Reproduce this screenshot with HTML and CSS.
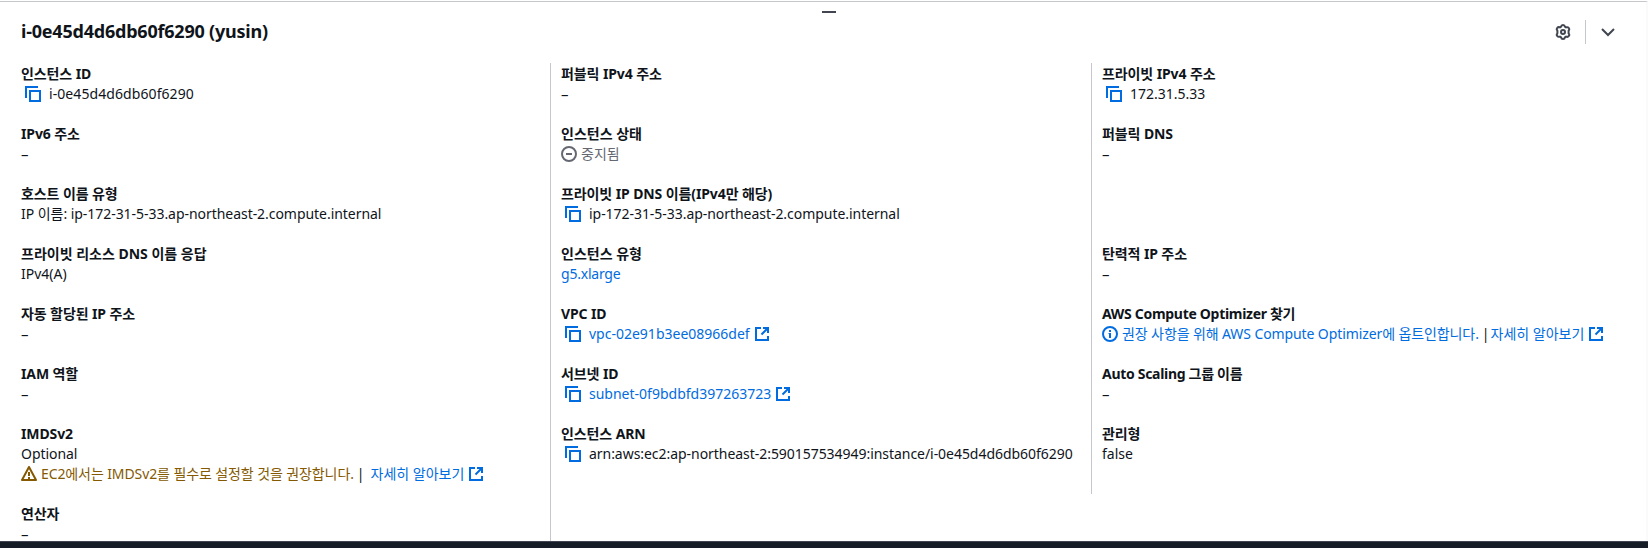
FILE: index.html
```html
<!DOCTYPE html>
<html lang="ko">
<head>
<meta charset="utf-8">
<title>i-0e45d4d6db60f6290 (yusin)</title>
<link rel="stylesheet" href="styles.css">
</head>
<body>
<svg class="sprite" aria-hidden="true">
  <symbol id="copy" viewBox="0 0 16 16"><path d="M15 5H5v10h10V5Z"/><path d="M13 1H1v11"/></symbol>
  <symbol id="external" viewBox="0 0 16 16"><path d="M9 2h5v5"/><path d="m7.500 8.500 6.500-6.500"/><path d="M14 10v4H2V2h5"/></symbol>
  <symbol id="stopped" viewBox="0 0 16 16"><circle cx="8" cy="8" r="7"/><path d="M11 8H5"/></symbol>
  <symbol id="info" viewBox="0 0 16 16"><circle cx="8" cy="8" r="7"/><path d="M8 12V7M8 6V4"/><path d="M6.500 7.500H9" stroke-width="1"/></symbol>
  <symbol id="warning" viewBox="0 0 16 16"><path d="m8 1 7 13H1L8 1Z" stroke-linejoin="round"/><path d="M8 6v4M8 11v2" /></symbol>
  <symbol id="gear" viewBox="0 0 16 16"><path stroke-linejoin="round" d="M6.100 2.700Q6.300 1 8 1T9.900 2.700L11 3.400Q12.800 2.700 13.800 4T13.600 6.600V9.400Q14.800 10.600 13.800 12T11 12.600L9.900 13.300Q9.700 15 8 15T6.100 13.300L5 12.600Q3.200 13.300 2.200 12T2.400 9.400V6.600Q1.200 5.400 2.200 4T5 3.400Z"/><circle cx="8" cy="8" r="2"/></symbol>
  <symbol id="chevron" viewBox="0 0 16 16"><path d="m2 5 6 6 6-6"/></symbol>
</svg>
<main class="panel">
  <div class="handle"></div>
  <header class="header">
    <h1 class="title">i-0e45d4d6db60f6290 (yusin)</h1>
    <div class="actions">
      <svg class="icon"><use href="#gear"/></svg>
      <span class="separator"></span>
      <svg class="icon"><use href="#chevron"/></svg>
    </div>
  </header>
  <div class="columns">
    <dl class="column">
      <div class="field"><dt>인스턴스 ID</dt><dd><svg class="icon copy"><use href="#copy"/></svg><span class="loose">i-0e45d4d6db60f6290</span></dd></div>
      <div class="field"><dt>IPv6 주소</dt><dd class="empty">–</dd></div>
      <div class="field"><dt>호스트 이름 유형</dt><dd class="snug">IP 이름: ip-172-31-5-33.ap-northeast-2.compute.internal</dd></div>
      <div class="field"><dt class="even">프라이빗 리소스 DNS 이름 응답</dt><dd>IPv4(A)</dd></div>
      <div class="field"><dt>자동 할당된 IP 주소</dt><dd class="empty">–</dd></div>
      <div class="field"><dt>IAM 역할</dt><dd class="empty">–</dd></div>
      <div class="field"><dt>IMDSv2</dt><dd class="snug">Optional</dd><dd class="warning"><svg class="icon status"><use href="#warning"/></svg><span class="tight">EC2에서는 IMDSv2를 필수로 설정할 것을 권장합니다.</span><span class="bar wide">|</span><a class="link">자세히 알아보기</a><svg class="icon external"><use href="#external"/></svg></dd></div>
      <div class="field"><dt>연산자</dt><dd class="empty">–</dd></div>
    </dl>
    <dl class="column">
      <div class="field"><dt>퍼블릭 IPv4 주소</dt><dd class="empty">–</dd></div>
      <div class="field"><dt class="even">인스턴스 상태</dt><dd class="stopped"><svg class="icon status"><use href="#stopped"/></svg><span>중지됨</span></dd></div>
      <div class="field"><dt>프라이빗 IP DNS 이름(IPv4만 해당)</dt><dd><svg class="icon copy"><use href="#copy"/></svg><span class="snug">ip-172-31-5-33.ap-northeast-2.compute.internal</span></dd></div>
      <div class="field"><dt class="even">인스턴스 유형</dt><dd><a class="link type">g5.xlarge</a></dd></div>
      <div class="field"><dt>VPC ID</dt><dd><svg class="icon copy"><use href="#copy"/></svg><a class="link">vpc-02e91b3ee08966def</a><svg class="icon external"><use href="#external"/></svg></dd></div>
      <div class="field"><dt>서브넷 ID</dt><dd><svg class="icon copy"><use href="#copy"/></svg><a class="link">subnet-0f9bdbfd397263723</a><svg class="icon external"><use href="#external"/></svg></dd></div>
      <div class="field"><dt>인스턴스 ARN</dt><dd><svg class="icon copy"><use href="#copy"/></svg><span class="snug">arn:aws:ec2:ap-northeast-2:590157534949:instance/i-0e45d4d6db60f6290</span></dd></div>
    </dl>
    <dl class="column short">
      <div class="field"><dt>프라이빗 IPv4 주소</dt><dd><svg class="icon copy"><use href="#copy"/></svg><span>172.31.5.33</span></dd></div>
      <div class="field"><dt>퍼블릭 DNS</dt><dd class="empty">–</dd></div>
      <div class="field"></div>
      <div class="field"><dt>탄력적 IP 주소</dt><dd class="empty">–</dd></div>
      <div class="field"><dt class="latin">AWS Compute Optimizer 찾기</dt><dd><svg class="icon status link"><use href="#info"/></svg><a class="link tight">권장 사항을 위해 AWS Compute Optimizer에 옵트인합니다.</a><span class="bar">|</span><a class="link">자세히 알아보기</a><svg class="icon external"><use href="#external"/></svg></dd></div>
      <div class="field"><dt class="latin">Auto Scaling 그룹 이름</dt><dd class="empty">–</dd></div>
      <div class="field"><dt>관리형</dt><dd>false</dd></div>
    </dl>
  </div>
</main>
<footer class="footer"></footer>
</body>
</html>
```

FILE: styles.css
```css
* { box-sizing: border-box; }
body {
  margin: 0;
  height: 548px;
  padding-top: 1px;
  display: flex;
  flex-direction: column;
  overflow: hidden;
  background: #fff;
  color: #0f141a;
  font: 14px/20px "Noto Sans", "Noto Sans CJK KR", sans-serif;
}
.sprite { display: none; }
.panel {
  height: 540px;
  display: flex;
  flex-direction: column;
  border-top: 1px solid #c6c6cd;
  border-right: 2px solid #fafafa;
}
.handle {
  flex: none;
  width: 14px;
  height: 2px;
  margin: 9px 0 0 822px;
  background: #424650;
}
.header {
  flex: none;
  display: flex;
  align-items: center;
  justify-content: space-between;
  height: 38px;
  padding: 0 30px 0 21px;
}
.title { margin: 0 0 2px; font-size: 18px; line-height: 24px; font-weight: 700; letter-spacing: -0.21px; }
.actions { display: flex; align-items: center; color: #424650; }
.separator { width: 1px; height: 24px; margin: 0 14px; background: #c6c6cd; }
.columns {
  flex: 1;
  min-height: 0;
  display: grid;
  grid-template-columns: 529px 541px 1fr;
  grid-template-rows: 100%;
  margin: 12px 0 0 21px;
}
.column {
  display: flex;
  flex-direction: column;
  gap: 20px;
  margin: 0;
  padding: 1px 0 30px;
  min-width: 0;
}
.column + .column { border-left: 1px solid #c6c6cd; padding-left: 10px; }
.short { align-self: start; }
.field { flex: none; min-height: 40px; white-space: nowrap; }
dt { height: 20px; font-weight: 700; letter-spacing: -0.1px; }
dd { margin: 0; height: 20px; display: flex; align-items: center; }
.even { letter-spacing: 0; }
.latin { letter-spacing: -0.3px; }
.empty { font-size: 15px; line-height: 12px; }
.loose { letter-spacing: 0.08px; }
.snug { letter-spacing: -0.045px; }
.tight { letter-spacing: -0.1px; }
.type { letter-spacing: -0.22px; }
.icon { flex: none; width: 16px; height: 16px; fill: none; stroke: currentColor; stroke-width: 2; }
.copy { margin: 0 8px 0 4px; color: #006ce0; }
.status { margin-right: 4px; }
.external { margin-left: 4px; color: #006ce0; }
.link { color: #006ce0; }
.stopped { color: #656871; }
.warning { color: #855900; }
.bar { margin: 0 1px 0 3px; color: #0f141a; }
.wide { margin-right: 6px; }
.footer { flex: none; position: relative; height: 7px; background: #161d26; border-top: 1px solid #424650; }
```
